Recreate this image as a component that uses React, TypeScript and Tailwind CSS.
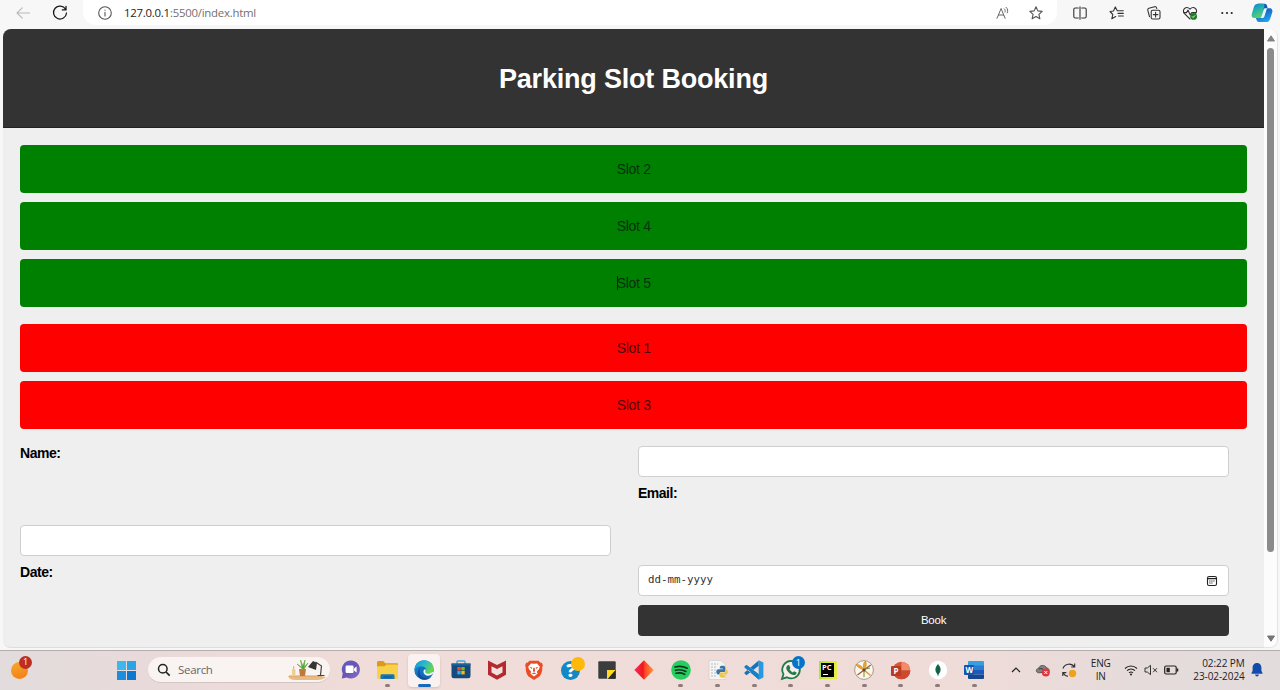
import React from "react";

type IconProps = { children: React.ReactNode; w?: number; h?: number; box?: string };
function Svg({ children, w = 20, h = 20, box = "0 0 20 20" }: IconProps) {
  return (
    <svg width={w} height={h} viewBox={box} fill="none" className="block shrink-0 overflow-visible">
      {children}
    </svg>
  );
}

const line = { stroke: "#333", strokeWidth: 1.1, strokeLinecap: "round", strokeLinejoin: "round" } as const;
const star = "M10 3.800 L11.800 7.900 L16.200 8.400 L12.900 11.300 L13.900 15.800 L10 13.500 L6.100 15.800 L7.100 11.300 L3.800 8.400 L8.200 7.900 Z";

function Cell({ className, children }: { className: string; children: React.ReactNode }) {
  return <div className={"flex h-full shrink-0 items-center justify-center " + className}>{children}</div>;
}

function Toolbar() {
  return (
    <div className="flex h-[29px] items-start bg-[#f7f7f7]">
      <div className="flex h-[25px] w-[83px] items-center pl-[13px]">
        <Svg><path d="M16.5 10H4.2M9.3 4.8L4 10l5.3 5.2" {...line} stroke="#b9b9b9" /></Svg>
        <div className="w-[17px]" />
        <Svg><path d="M15.600 6.200A6.500 6.500 0 1 0 16.500 10M16 3.300v3.600h-3.700" {...line} stroke="#161616" strokeWidth={1.25} /></Svg>
      </div>
      <div className="flex h-[25px] w-[974px] items-center rounded-b-[13px] bg-white pl-[12px]">
        <Svg>
          <circle cx="10" cy="10" r="6.3" {...line} stroke="#555" />
          <path d="M10 9.2v3.8M10 7v.3" {...line} stroke="#555" />
        </Svg>
        <span className="ml-[9px] w-[869px] whitespace-nowrap font-['Open_Sans',sans-serif] text-[11.4px] leading-[25px] tracking-[-0.24px] text-[#707070]">
          <span className="text-[#222]">127.0.0.1</span>:5500/index.html
        </span>
        <Svg>
          <path d="M4 15.3L8.1 5.5l4 9.8M5.5 12h5.2M11.3 5.8c1 .9 1.1 2 .7 3.2M13.1 4.3c1.8 1.6 1.9 3.6 1.2 5.5" {...line} stroke="#666" strokeWidth={1} />
        </Svg>
        <div className="w-[13px]" />
        <Svg><path d={star} {...line} stroke="#555" /></Svg>
      </div>
      <div className="flex h-[25px] items-center">
        <Cell className="ml-[4px] w-[37px]">
          <Svg>
            <path d="M8.3 5H5.2C4.400 5 3.800 5.600 3.800 6.400v7.200c0 .8.6 1.400 1.400 1.400h3.100M11.700 5h3.100c.8 0 1.400.6 1.400 1.400v7.200c0 .8-.6 1.400-1.400 1.400h-3.100M10 3.700v12.600" {...line} />
          </Svg>
        </Cell>
        <Cell className="w-[37px]">
          <Svg>
            <path d="M10.3 7.8L8.3 3.9 6.5 8 3 8.5l2.8 3-1 4.3 3.9-2.2M10.3 7.8h6M11 10.4h5.3M11.5 13h4.8" {...line} />
          </Svg>
        </Cell>
        <Cell className="w-[37px]">
          <Svg>
            <rect x="7.2" y="7.2" width="8.8" height="8.8" rx="1.5" {...line} />
            <path d="M11.6 9.3v4.6M9.3 11.6h4.6M5.5 13.6L3.8 7.4c-.3-1.1.2-1.8 1.1-2.1l5.7-1.6c1-.3 1.8.3 2 1.2l.2.6" {...line} />
          </Svg>
        </Cell>
        <Cell className="w-[36px]">
          <Svg>
            <path d="M10 16L4.5 10.6C1.2 6.8 6.2 2.3 10 6.1c3.800-3.800 8.800.7 5.500 4.500M3.500 9.600h3l1.500-2.500 2.200 4.800 1.600-2.400h4.400" {...line} />
            <circle cx="13.6" cy="13.4" r="3.4" fill="#15801e" />
            <path d="M12 13.4l1.1 1.1 2.1-2.2" stroke="#fff" strokeWidth=".9" />
          </Svg>
        </Cell>
        <Cell className="w-[37px]">
          <Svg>
            <circle cx="5.300" cy="10" r="1.050" fill="#222" /><circle cx="10" cy="10" r="1.050" fill="#222" /><circle cx="14.700" cy="10" r="1.050" fill="#222" />
          </Svg>
        </Cell>
        <Cell className="w-[33px]">
          <Svg w={22} h={20} box="0 0 22 20">
            <defs>
              <linearGradient id="cpA" x1="0" y1="0" x2=".4" y2="1"><stop stopColor="#1b7fc8" /><stop offset=".45" stopColor="#20aeb5" /><stop offset="1" stopColor="#5bd068" /></linearGradient>
              <linearGradient id="cpB" x1=".3" y1="0" x2=".7" y2="1"><stop stopColor="#173f93" /><stop offset=".4" stopColor="#1763c8" /><stop offset="1" stopColor="#25a8ef" /></linearGradient>
            </defs>
            <path d="M7 .8h6.500c1.400 0 2.200.8 2.600 2.200l.6 2.300h1.900c2.400 0 3.300 2 2.600 4.200l-1.900 6c-.8 2.500-2 3.600-4.200 3.600H8.500c-1.600 0-2.500-.8-3-2.400l-.7-2.200 4-3z" fill="url(#cpB)" />
            <path d="M7 .8h5c1.500 0 1.800 1.200 1.400 2.500L10.400 13c-.5 1.500-1.200 2.100-2.600 2.100H3.500C1.200 15.100.1 13.300.8 11l2.100-7C3.600 1.700 5 .8 7 .8z" fill="url(#cpA)" />
            <path d="M12.600 6.800c.4-1.100 1-1.500 2.100-1.500h2l-1 .9-2.300 7.200c-.4 1.200-1.200 1.700-2.500 1.700H8.400c1.100-.2 1.700-.9 2-1.900z" fill="#dff8fc" />
          </Svg>
        </Cell>
      </div>
    </div>
  );
}

function Slot({ name, taken, caret }: { name: string; taken?: boolean; caret?: boolean }) {
  return (
    <div className={"flex h-[48.4px] items-center justify-center rounded-[4px] text-[14px] tracking-[-0.29px] " + (taken ? "bg-[#ff0000] text-[#4c0b0b]" : "bg-[#008000] text-[#06320b]")}>
      <span className="relative">
        {caret && <span className="absolute top-[3px] left-0 h-[14px] w-px bg-[#032603]" />}
        {name}
      </span>
    </div>
  );
}

const field = "block h-[31.2px] rounded-[4px] border border-[#cfcfcf] bg-white";
const label = "text-[14px] font-bold leading-[15px] tracking-[-0.46px] text-black";

function Page() {
  return (
    <div className="flex h-[619px] bg-[#f7f7f7] pl-[3px]">
      <div className="h-[619px] w-[1261px] overflow-hidden rounded-l-[8px] border-b border-[#dedede] bg-[#efefef] font-['Liberation_Sans',Arial,sans-serif]">
        <header className="flex h-[99px] items-center justify-center border-b border-[#222] bg-[#333] pt-[2px]">
          <h1 className="text-[27px] font-bold tracking-[-0.2px] text-white">Parking Slot Booking</h1>
        </header>
        <main className="w-[1244.4px] pt-[17px] pl-[17px]">
          <section className="flex flex-col gap-[8.6px]">
            <Slot name="Slot 2" />
            <Slot name="Slot 4" />
            <Slot name="Slot 5" caret />
          </section>
          <section className="mt-[16.6px] flex flex-col gap-[8.6px]">
            <Slot name="Slot 1" taken />
            <Slot name="Slot 3" taken />
          </section>
          <form className="mt-[16.6px] grid auto-rows-[31.2px] grid-cols-[591.4px_591.4px] gap-x-[26.5px] gap-y-[8.5px]">
            <label className={label}>Name:</label>
            <input className={field} />
            <div />
            <label className={label}>Email:</label>
            <input className={field} />
            <div />
            <label className={label}>Date:</label>
            <div className={field + " flex items-center justify-between pr-[10px] pl-[9px]"}>
              <span className="font-['DejaVu_Sans_Mono',monospace] text-[10.8px] text-[#333]">dd-mm-yyyy</span>
              <Svg w={12} h={12} box="0 0 12 12">
                <rect x="1.5" y="1.5" width="9" height="9" rx="1.6" stroke="#222" strokeWidth="1.1" />
                <path d="M1.5 3.6h9" stroke="#222" strokeWidth="1.3" />
                <path d="M3.3 6h5.5M3.3 8h3.8" stroke="#222" strokeWidth="1" strokeDasharray="1.2 .8" />
              </Svg>
            </div>
            <div />
            <button type="button" className="h-[31.2px] rounded-[4px] bg-[#333] text-[11.500px] tracking-[-0.2px] text-white">Book</button>
          </form>
        </main>
      </div>
      <div className="flex h-[619px] w-[14px] flex-col items-center rounded-r-[8px] border-r border-b border-[#e4e4e4] bg-[#fcfcfc]">
        <div className="flex h-[19px] items-center"><Svg w={8} h={7} box="0 0 8 7"><path d="M4 .8L7.5 6H.5z" fill="#858585" stroke="#858585" strokeLinejoin="round" /></Svg></div>
        <div className="h-[504px] w-[7px] rounded-[4px] bg-[#8b8b8b]" />
        <div className="mt-auto flex h-[18px] items-center"><Svg w={8} h={7} box="0 0 8 7"><path d="M4 6.200L.5 1h7z" fill="#757575" stroke="#757575" strokeLinejoin="round" /></Svg></div>
      </div>
    </div>
  );
}

function ChatIcon() {
  return (
    <Svg>
      <defs><linearGradient id="chat" x1="0" y1="0" x2="1" y2="1"><stop stopColor="#5b5fc7" /><stop offset=".5" stopColor="#6a55b3" /><stop offset="1" stopColor="#8175c8" /></linearGradient></defs>
      <path d="M10 .5a9 9 0 1 1-4.200 17L.8 18.500l.9-5A9 9 0 0 1 10 .5z" fill="url(#chat)" />
      <rect x="4.600" y="5.500" width="8" height="7.600" rx="1.400" fill="#fff" /><path d="M13 8.500l2.600-2v6l-2.600-2z" fill="#fff" />
    </Svg>
  );
}
function FolderIcon() {
  return (
    <Svg w={21} box="0 0 21 20">
      <path d="M0 2.500Q0 1 1.300 1h5l2 2.200H20q1 0 1 1V8H0z" fill="#d99b19" />
      <path d="M0 6.200h7.500l2-1.800H20q1 0 1 1V18q0 1-1 1H1q-1 0-1-1z" fill="#f9d04a" />
      <path d="M3.500 19v-3.300q0-1.400 1.400-1.400h11.200q1.400 0 1.400 1.400V19z" fill="#1576b8" /><path d="M6.500 17h8" stroke="#0b558e" />
    </Svg>
  );
}
function EdgeIcon() {
  return (
    <Svg>
      <defs>
        <linearGradient id="eA" x1="0" y1="0" x2="1" y2=".5"><stop stopColor="#188dcc" /><stop offset=".5" stopColor="#27b8cf" /><stop offset="1" stopColor="#67d64b" /></linearGradient>
        <linearGradient id="eB" x1="0" y1="0" x2="1" y2="1"><stop stopColor="#1688d9" /><stop offset="1" stopColor="#0c59a5" /></linearGradient>
      </defs>
      <circle cx="10" cy="10" r="9.700" fill="url(#eB)" />
      <path d="M.4 9.800C.8 3.900 5 .2 10.200.2c5.600 0 9.500 3.900 9.600 8.300.1 3.200-2.400 4.900-5 4.900-2.300 0-3.600-.8-3.200-1.500.7-.9.9-1.600.6-2.500C11.200 5.500 4 4.700.4 9.800z" fill="url(#eA)" />
      <path d="M7.800 7.100C4.900 8.600 4.800 13.400 7.600 16.200c2.500 2.500 6.600 2.700 10.100.2-1.800 2.300-4.600 3.400-7.600 3.400-5.700-.2-8-6.700-5.200-10.400.8-1.100 1.800-1.800 2.900-2.300z" fill="#104e9b" />
      <path d="M11.200 9.200c1.700 1-.6 2.400.6 3.500 1.700 1.600 4.600.9 6.700-.6.9-.5 1.300.2.9.8-2 2.900-6.200 3.700-8.600 1.500-2-1.900-1.600-4.700.4-5.200z" fill="#eef7fa" />
    </Svg>
  );
}
function StoreIcon() {
  return (
    <Svg>
      <path d="M6 5V2q0-1 1-1h6q1 0 1 1v3" stroke="#3ca7de" strokeWidth="1.400" />
      <path d="M.5 3.600h19V16q0 2.200-2.200 2.200H2.700Q.5 18.200.5 16z" fill="#16497c" />
      <path d="M.5 3.600h19v2H.5z" fill="#1e629d" />
      <path d="M6.300 7h3.400v3.400H6.300z" fill="#f25022" /><path d="M10.300 7h3.400v3.400h-3.400z" fill="#7fba00" />
      <path d="M6.300 11h3.400v3.400H6.300z" fill="#30a9e8" /><path d="M10.300 11h3.400v3.400h-3.400z" fill="#ffb900" />
    </Svg>
  );
}
function McAfeeIcon() {
  return <Svg><path d="M1 .5l9 4.600 9-4.600v14.200L10 19.700 1 14.700z" fill="#b4292f" /><path d="M4.500 6.200L10 9l5.500-2.800v6.300L10 15.600l-5.500-3.100z" fill="#f1e0dc" /></Svg>;
}
function BraveIcon() {
  return (
    <Svg>
      <path d="M5.500.8h9l2 2 1.400-.1 1 2.800-.7 1.700c.4 4.300-1.300 8.300-3.600 9.900L10 20l-4.600-2.900C3.100 15.500 1.400 11.500 1.800 7.200l-.7-1.700 1-2.800 1.400.1z" fill="#ed4b23" />
      <path d="M10 3.800l3-.4 2.800 3.300-.7 2.300-2.300 2.800.9 1.800L10 16.500l-3.700-2.900.9-1.800L4.900 9l-.7-2.300L7 3.400z" fill="#fff" />
      <path d="M5.500 6.700l2.800.7L7.700 9zM14.500 6.700l-2.800.7.6 1.600zM9.300 7.800h1.400l.4 3.400L10 12l-1.100-.8zM7.500 13.500l2.500-.9 2.500.9-2.500.8z" fill="#ed4b23" />
    </Svg>
  );
}
function HelpIcon() {
  return (
    <div className="relative flex h-[19px] w-[19px] items-center justify-center rounded-full bg-[#1388c4] font-['Open_Sans',sans-serif] text-[18px] leading-none font-extrabold text-white">
      ?<span className="absolute -top-[4px] -right-[5px] h-[14px] w-[14px] rounded-full bg-[#ffb90a]" />
    </div>
  );
}
function NotesIcon() {
  return <Svg w={18} h={18} box="0 0 18 18"><rect x=".3" y=".3" width="17.400" height="17.400" rx="1" fill="#3b3c3e" /><path d="M9 9h8.700L10 17.700H9z" fill="#ffda1f" /><path d="M17.700 9v8.700H10z" fill="#2a2a2a" /></Svg>;
}
function DiamondIcon() {
  return <Svg><defs><linearGradient id="dia"><stop stopColor="#ff2768" /><stop offset=".45" stopColor="#ee1918" /><stop offset=".55" stopColor="#ff4828" /><stop offset="1" stopColor="#ff9833" /></linearGradient></defs><path d="M10 .3l9.700 9.700-9.700 9.700L.3 10z" fill="url(#dia)" /></Svg>;
}
function SpotifyIcon() {
  return <Svg><circle cx="10" cy="10" r="9.800" fill="#24cf5f" /><path d="M4 7c4.200-1.200 8.500-.8 12.200 1.200M4.500 10.300c3.700-1 7.200-.6 10.400 1.100M5 13.300c3.100-.8 5.900-.4 8.600 1" stroke="#12351e" strokeWidth="1.700" strokeLinecap="round" /></Svg>;
}
function PythonFileIcon() {
  return (
    <Svg>
      <path d="M1 .5h12l4 4v15H1z" fill="#f4f4f3" stroke="#cdcaca" strokeWidth=".6" /><path d="M3 4h7M3 7h6M3 10h5M3 13h5M3 16h5" stroke="#b8bac2" strokeDasharray="2 1" />
      <path d="M14.200 5.800c-2.500 0-2.400 1.100-2.400 2.800h3v.6h-4.300c-1.500 0-2.200 1.100-2.200 2.600s.7 2.600 1.900 2.600h1.300c0-1.700.9-2.300 2.100-2.300h2.300c1.200 0 1.400-.8 1.400-1.800V7.600c0-1.200-1-1.800-3.100-1.800z" fill="#3973a5" />
      <path d="M17.700 9.200c1.500 0 2.100 1.100 2.100 2.700s-.6 2.500-1.900 2.500h-3.300v.5h2.600c0 1.900-.6 2.900-2.900 2.900s-2.800-.8-2.800-2v-1.700c0-1.200.6-1.500 1.500-1.500h2.700c1.200 0 2-.8 2-2.100z" fill="#f1c642" />
    </Svg>
  );
}
function CodeIcon() {
  return (
    <Svg>
      <path d="M14.700.5v5.200L2.500 15.200.5 13.500v-1L14.700.5zM14.700 19.500v-5.200L2.500 4.900.5 6.500v1z" fill="#1672b9" />
      <path d="M14.700.3l4.700 2.300v14.800l-4.700 2.300z" fill="#2799e3" />
      <path d="M.5 6.500L2.500 4.900l12.200 9.300v5.300z" fill="#1482ca" />
    </Svg>
  );
}
function WhatsAppIcon() {
  return (
    <div className="relative">
      <Svg>
        <path d="M10.200 1a8.700 8.700 0 1 1-4.300 16.300L1 18.800l1.500-4.700A8.700 8.700 0 0 1 10.200 1z" fill="#f6eeeb" stroke="#237b4b" strokeWidth="1.800" />
        <path d="M6.600 5.300l1.500-.2 1.300 3-.8 1.200c.8 1.500 1.700 2.400 3.100 3.100l1.300-1.200 2.600 1.300c0 2.200-2.100 3-4.200 2.300-3.600-1.200-6.500-5-6.100-7.200.2-1.100.7-1.800 1.300-2.300z" fill="#237b4b" />
      </Svg>
      <span className="absolute -top-[4px] -right-[4px] flex h-[13px] w-[13px] items-center justify-center rounded-full bg-[#0872c8] font-['Open_Sans',sans-serif] text-[9px] text-white">1</span>
    </div>
  );
}
function PyCharmIcon() {
  return (
    <div className="flex h-[18px] w-[18px] items-center justify-center bg-[linear-gradient(100deg,#9fe344,#c9ea35_45%,#efed47)]">
      <div className="relative h-[14px] w-[13px] bg-black pl-px font-['Open_Sans',sans-serif] text-[7.500px] leading-[9px] font-bold text-white">
        PC<span className="absolute bottom-[2px] left-[2px] h-px w-[5px] bg-white" />
      </div>
    </div>
  );
}
function PaintIcon() {
  return (
    <Svg>
      <circle cx="10" cy="10" r="9.400" fill="#faf7ed" stroke="#80796c" strokeWidth=".7" />
      <path d="M9.500 9.800C7 9 2.500 6.500 1.800 4.400c3.700-.2 7 2 7.700 5.400zM9.500 9.800C9.100 6.500 9.300 2 11.500 1c1.800 3.500.5 6.700-2 8.800z" fill="#efa22e" stroke="#c37e24" strokeWidth=".5" />
      <path d="M10 10l6.700-5M10 10L3.500 15" stroke="#a95735" strokeWidth="1.300" /><path d="M10 10l6.500 5.500" stroke="#e8943a" strokeWidth="1.600" /><path d="M10 10v7M11 9l5-1" stroke="#698d3a" strokeWidth="1" />
      <circle cx="10" cy="10" r="1.500" fill="#5f4b2c" />
    </Svg>
  );
}
function PowerPointIcon() {
  return (
    <div className="relative h-[19px] w-[20px]">
      <Svg h={19}><circle cx="10.500" cy="10" r="9.300" fill="#d95536" /><path d="M10.500.7a9.300 9.300 0 0 1 9.300 9.300h-9.300z" fill="#f18b6a" /><path d="M1.200 10h18.600a9.300 9.300 0 0 1-18.600 0z" fill="#cc4930" /></Svg>
      <span className="absolute top-[5px] left-0 flex h-[10px] w-[10px] items-center justify-center rounded-[1px] bg-[#ba3b20] font-['Open_Sans',sans-serif] text-[8px] font-bold text-white">P</span>
    </div>
  );
}
function MongoIcon() {
  return <Svg><circle cx="10" cy="10" r="9.200" fill="#fff" /><path d="M10 4c3.500 3.900 3.500 7.300 0 11-3.500-3.700-3.500-7.100 0-11z" fill="#17684b" /><path d="M10 7v9" stroke="#104835" strokeWidth=".6" /></Svg>;
}
function WordIcon() {
  return (
    <div className="relative h-[18px] w-[20px]">
      <Svg h={18} box="0 0 20 18"><path d="M5 0h14q1 0 1 1v4H4V1q0-1 1-1z" fill="#379ee2" /><path d="M4 4.500h16V9H4z" fill="#2b7cd3" /><path d="M4 9h16v4.500H4z" fill="#185abd" /><path d="M4 13.500h16V17q0 1-1 1H5q-1 0-1-1z" fill="#15478e" /></Svg>
      <span className="absolute top-[4px] left-0 flex h-[10px] w-[10px] items-center justify-center rounded-[1px] bg-[#1754ac] font-['Open_Sans',sans-serif] text-[8px] font-bold text-white">W</span>
    </div>
  );
}

const apps: { icon: React.ReactNode; open?: boolean; active?: boolean }[] = [
  { icon: <ChatIcon /> }, { icon: <FolderIcon />, open: true }, { icon: <EdgeIcon />, active: true },
  { icon: <StoreIcon /> }, { icon: <McAfeeIcon /> }, { icon: <BraveIcon /> }, { icon: <HelpIcon /> },
  { icon: <NotesIcon /> }, { icon: <DiamondIcon /> }, { icon: <SpotifyIcon />, open: true },
  { icon: <PythonFileIcon />, open: true }, { icon: <CodeIcon />, open: true }, { icon: <WhatsAppIcon />, open: true },
  { icon: <PyCharmIcon />, open: true }, { icon: <PaintIcon />, open: true }, { icon: <PowerPointIcon />, open: true },
  { icon: <MongoIcon />, open: true }, { icon: <WordIcon />, open: true },
];

function Taskbar() {
  return (
    <div className="flex h-[40px] items-center border-t border-[#b5acac] bg-[linear-gradient(90deg,#e2dcdc_0%,#e9dada_12%,#f0dcd8_30%,#efdcd8_75%,#e6dbdb_88%,#e3dcdd_100%)] pb-px font-['Open_Sans',sans-serif]">
      <div className="flex w-[117px] shrink-0 pl-[11px]">
        <div className="relative h-[17px] w-[17px] rounded-full bg-[linear-gradient(160deg,#f5ab2c,#f47a15)]">
          <span className="absolute -top-[6px] -right-[4px] flex h-[13px] w-[13px] items-center justify-center rounded-full bg-[#be2d24] text-[9px] text-white">1</span>
        </div>
      </div>
      <div className="grid h-[19px] w-[19px] shrink-0 grid-cols-2 gap-px">
        <div className="bg-[#3eb7ed]" /><div className="bg-[#2ba4e6]" /><div className="bg-[#1d8ddd]" /><div className="bg-[#0b78d0]" />
      </div>
      <div className="ml-[12px] flex h-[26px] w-[182px] shrink-0 items-center rounded-full border-b border-[#d5c5c2] bg-[#f9f4f1] pl-[9px]">
        <Svg w={14} h={14} box="0 0 14 14"><circle cx="5.800" cy="5.800" r="4.300" stroke="#222" strokeWidth="1.500" /><path d="M9 9l3.700 3.700" stroke="#222" strokeWidth="1.700" /></Svg>
        <span className="ml-[7px] w-[109px] pt-px text-[11.500px] tracking-[-0.3px] text-[#666]">Search</span>
        <Svg w={40} h={22} box="0 0 40 22">
          <path d="M1 17h32l6 1c-2 2-5 3-8 3H8c-3 0-6-1-7-4z" fill="#e8bb84" /><path d="M2 17h33" stroke="#d7a26c" />
          <rect x="5" y="10" width="3.500" height="7" rx="1" fill="#efcf91" /><path d="M6.700 9.700V7.300" stroke="#e19c39" />
          <path d="M12 10h7l-1 7h-5z" fill="#c47838" />
          <path d="M15.500 10L10 5l5 3.500L13.500 1l2.300 6L18 1l-.8 7L21 4l-4 6z" fill="#55a33d" stroke="#65ad42" strokeWidth=".7" />
          <path d="M21 8l5-6 4 2-1 7z" fill="#37332e" /><path d="M28.500 3l6 4-1 9M30.500 16.500h7" stroke="#49423d" strokeWidth="1.200" />
        </Svg>
      </div>
      <div className="ml-[2.300px] flex h-[39px] shrink-0">
        {apps.map((a, i) => (
          <div key={i} className="flex w-[36.700px] items-center justify-center">
            <div className={"relative flex h-[33px] w-[32px] items-center justify-center rounded-[4px] " + (a.active ? "bg-[#f9f2f0] shadow-sm" : "")}>
              {a.icon}
              {a.active && <span className="absolute bottom-0 h-[3px] w-[13px] rounded-full bg-[#1668bd]" />}
              {a.open && <span className="absolute bottom-0 h-[3px] w-[5px] rounded-full bg-[#8c7b7a]" />}
            </div>
          </div>
        ))}
      </div>
      <div className="ml-[13px] flex h-full flex-1 items-center">
        <Cell className="w-[20px]"><Svg w={10} h={8} box="0 0 10 8"><path d="M1 6l4-4 4 4" stroke="#222" strokeWidth="1.200" /></Svg></Cell>
        <Cell className="ml-[7px] w-[20px]">
          <Svg w={16} h={14} box="0 0 16 14"><path d="M3.500 9.800C.5 9.500.7 5.600 3.500 5.500c1-3.800 6.500-4 8-.7 2 .2 3 2 2.500 4z" fill="#818181" stroke="#575757" /><path d="M4 6c2-1 4 0 5 1" stroke="#333" /><circle cx="10.800" cy="9.500" r="4" fill="#df3842" /><path d="M9.300 8l3 3m0-3l-3 3" stroke="#fff" /></Svg>
        </Cell>
        <Cell className="ml-[6px] w-[20px]">
          <Svg w={16} h={16} box="0 0 16 16"><path d="M2 6.500C3.500 1.500 10.500.5 13.500 5M13.700 1.500V5h-3.500M7 14.300c-2.500-.2-4-1.700-5-3.500M1.800 14v-3.400h3.500" stroke="#333" strokeWidth="1.100" /><circle cx="11.500" cy="11.500" r="3.700" fill="#efa21a" /></Svg>
        </Cell>
        <div className="ml-[7px] w-[30px] text-center text-[10px] leading-[13.500px] tracking-[-0.2px] text-[#222]">ENG<br />IN</div>
        <div className="ml-[8px] flex w-[55px] items-center justify-between">
          <Svg w={14} h={12} box="0 0 14 12"><path d="M1 4.500c3.500-3.300 8.500-3.300 12 0M3 6.700c2.300-2.100 5.700-2.100 8 0M5 8.800c1.200-1 2.800-1 4 0" stroke="#222" strokeWidth="1.100" /><circle cx="7" cy="10.500" r="1" fill="#222" /></Svg>
          <Svg w={14} h={12} box="0 0 14 12"><path d="M1 4h2.300L6.500 1.300v9.400L3.300 8H1zM9 4.200l4 4m0-4l-4 4" stroke="#333" /></Svg>
          <Svg w={15} h={10} box="0 0 15 10"><rect x=".7" y="1" width="11.500" height="8" rx="1.500" stroke="#222" strokeWidth="1.200" /><rect x="2.500" y="2.800" width="3.300" height="4.400" fill="#222" /><path d="M13.500 3.500v3" stroke="#222" strokeWidth="1.500" /></Svg>
        </div>
        <div className="w-[66px] text-right text-[10px] leading-[13.500px] tracking-[-0.08px] whitespace-nowrap text-[#222]">02:22 PM<br />23-02-2024</div>
        <div className="ml-[6px]"><Svg w={12} h={14} box="0 0 12 14"><path d="M6 0C3 0 1.600 2.300 1.600 4.700v3L.5 10v.8h11V10l-1.100-2.300v-3C10.400 2.300 9 0 6 0zM4 11.500h4Q7.500 13.500 6 13.500T4 11.500z" fill="#104caa" /></Svg></div>
      </div>
    </div>
  );
}

export default function App() {
  return (
    <div className="h-[690px] w-[1280px] overflow-hidden bg-[#f7f7f7]">
      <Toolbar />
      <Page />
      <div className="h-[2px]" />
      <Taskbar />
    </div>
  );
}
